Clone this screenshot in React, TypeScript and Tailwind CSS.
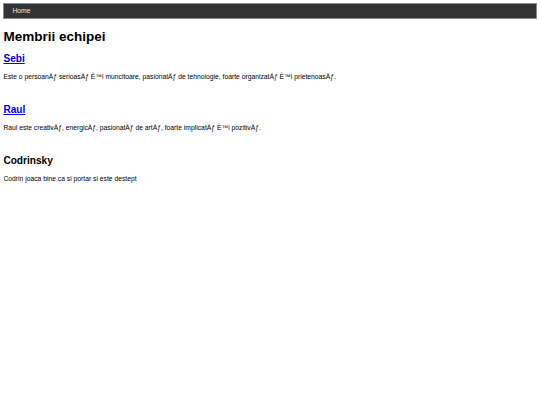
const members = [
  {
    name: "Sebi",
    link: true,
    text: "Este o persoanÄƒ serioasÄƒ È™i muncitoare, pasionatÄƒ de tehnologie, foarte organizatÄƒ È™i prietenoasÄƒ.",
  },
  {
    name: "Raul",
    link: true,
    text: "Raul este creativÄƒ, energicÄƒ, pasionatÄƒ de artÄƒ, foarte implicatÄƒ È™i pozitivÄƒ.",
  },
  {
    name: "Codrinsky",
    link: false,
    text: "Codrin joaca bine ca si portar si este destept",
  },
];

export default function App() {
  return (
    <div className="min-h-[405px] bg-white px-[3.4px] pt-[3.4px] font-['Liberation_Sans',Arial,sans-serif] text-black">
      {/* Top nav */}
      <nav className="flex h-[16px] items-center border border-[#8a8a8a] bg-[#333333] pl-[8px]">
        <a href="#" className="text-[6.75px] leading-none text-[#e6e6e6]">
          Home
        </a>
      </nav>

      <h1 className="mt-[10px] text-[13.5px] font-bold leading-[15.5px]">Membrii echipei</h1>

      {members.map((m) => (
        <section key={m.name} className="mt-[8px] mb-[23px]">
          <h2 className="text-[10.125px] font-bold leading-[11.6px]">
            {m.link ? (
              <a href="#" className="text-[#0000ee] underline">
                {m.name}
              </a>
            ) : (
              m.name
            )}
          </h2>
          <p className="mt-[8.5px] text-[6.75px] leading-[7.8px]">{m.text}</p>
        </section>
      ))}
    </div>
  );
}
